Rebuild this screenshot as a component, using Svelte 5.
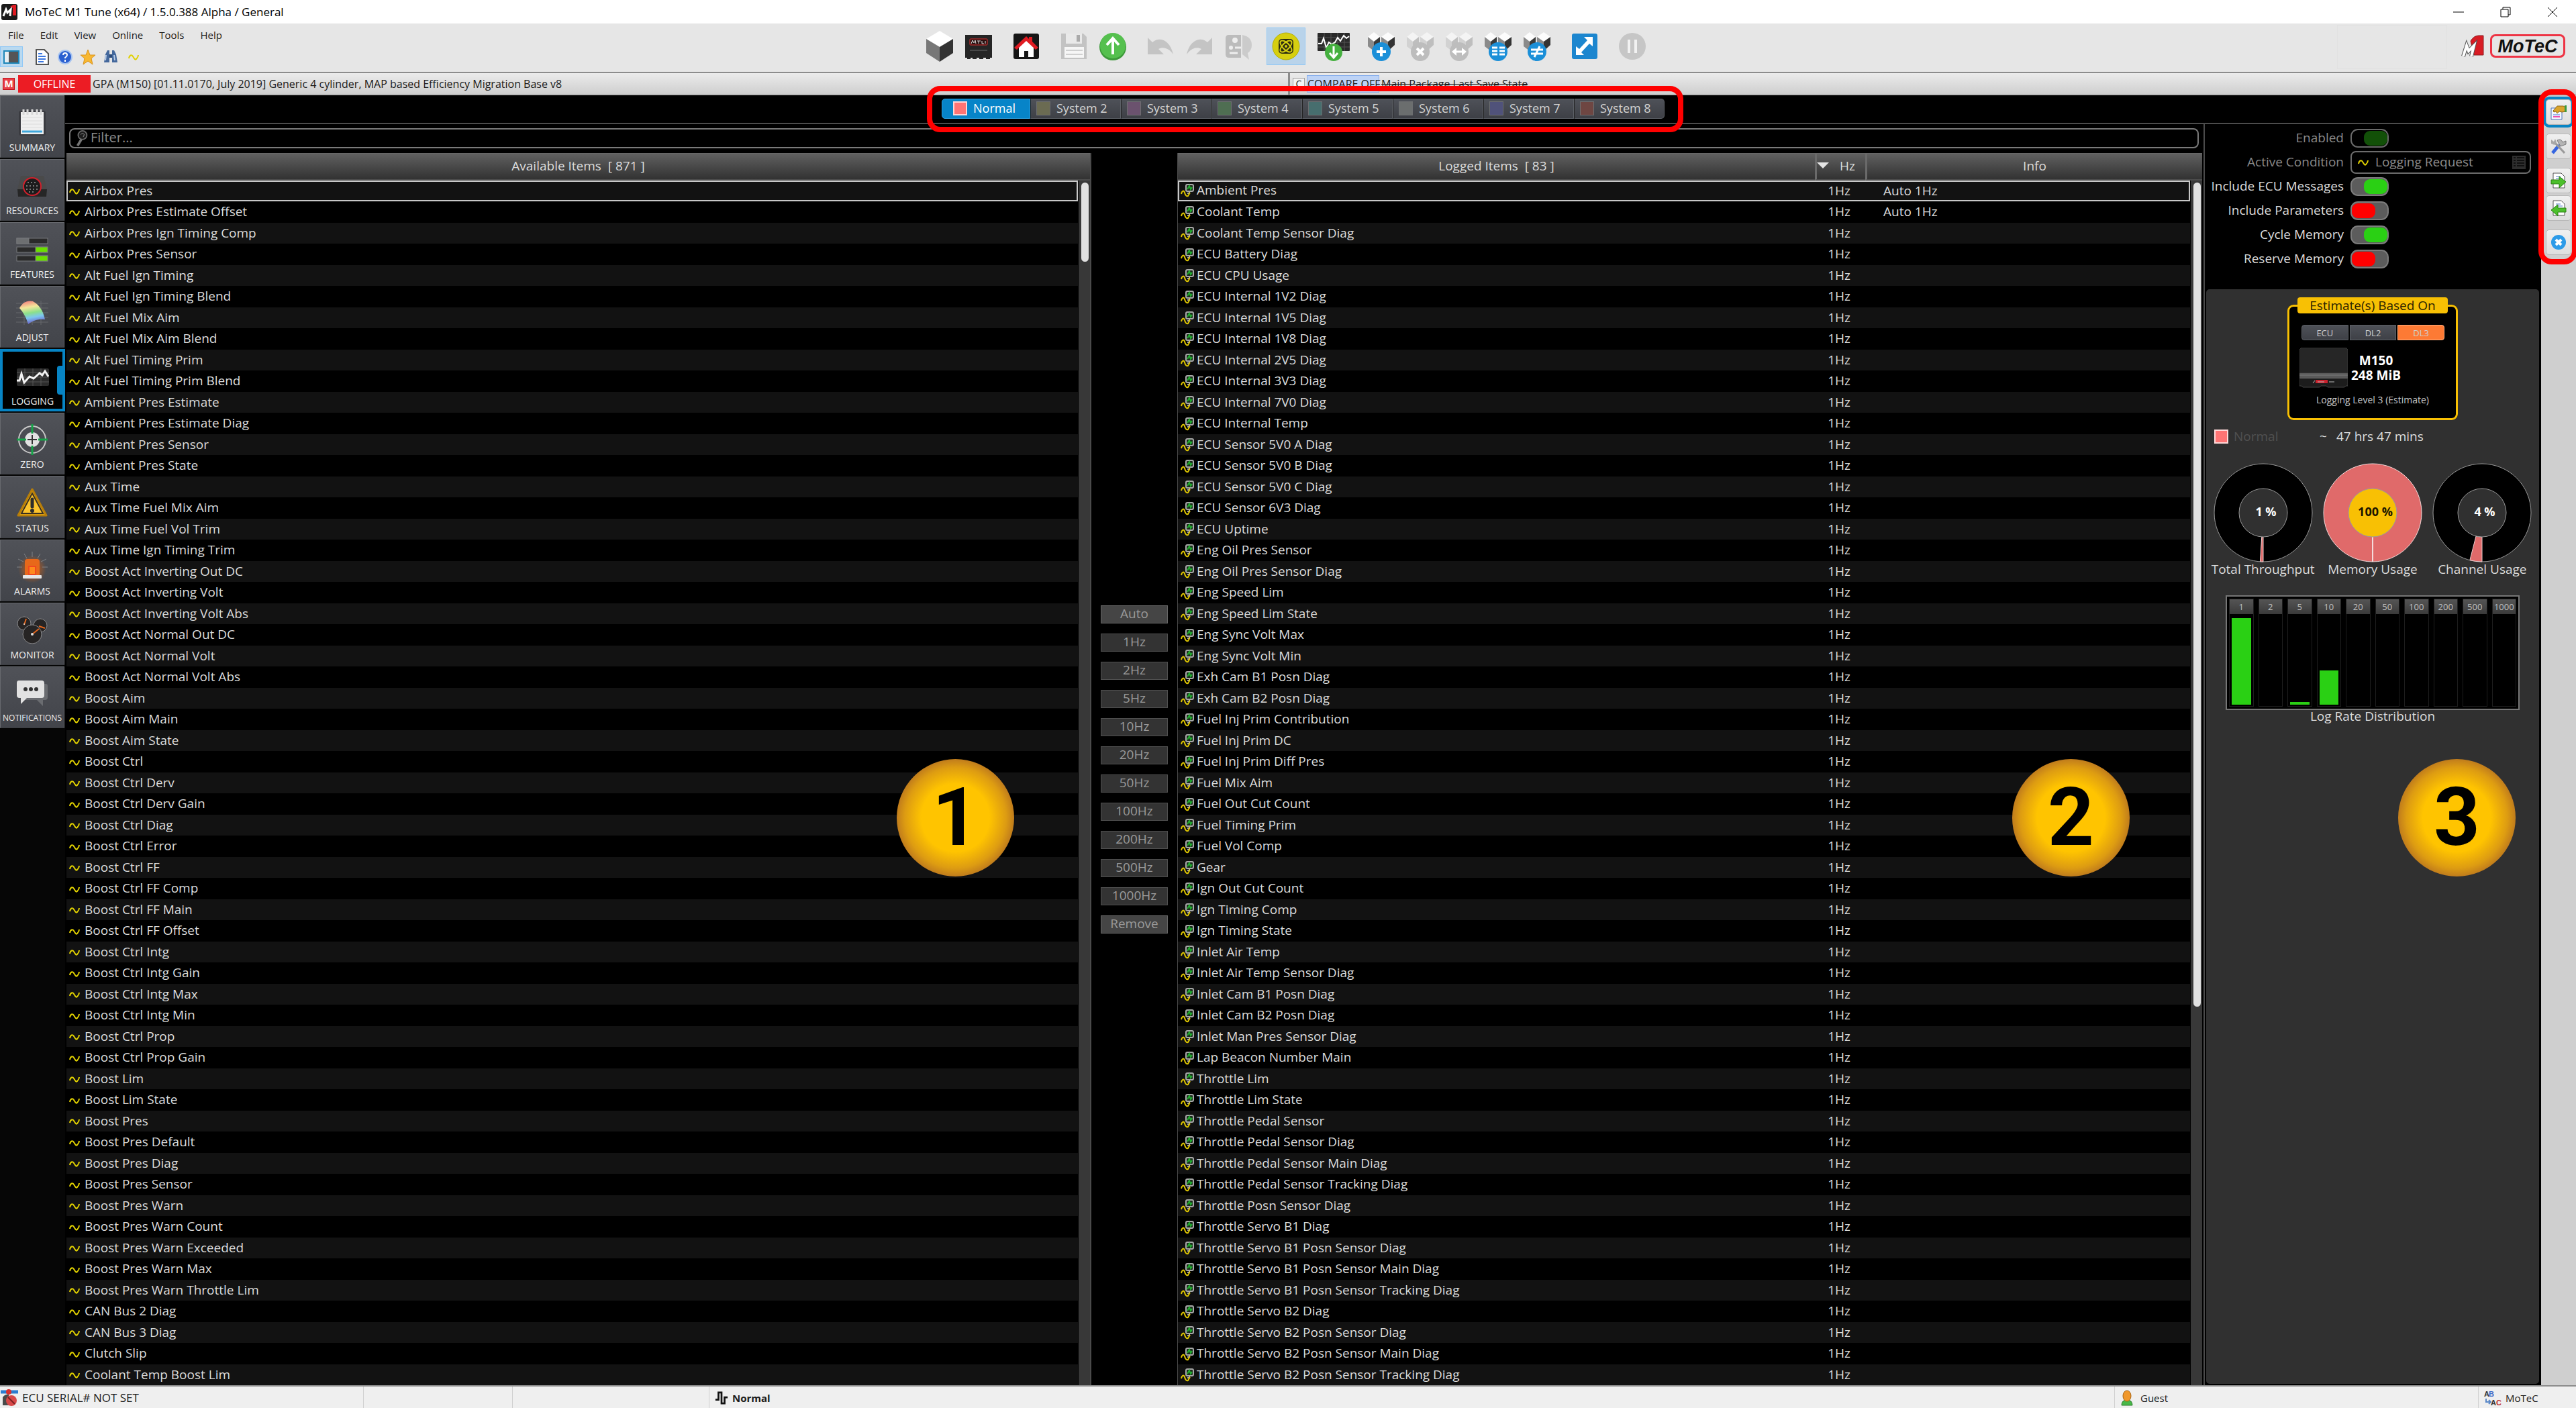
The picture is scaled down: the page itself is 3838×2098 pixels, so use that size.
<script>
  const menus = ['File', 'Edit', 'View', 'Online', 'Tools', 'Help'];

  const toolGroups = [
    ['cube', 'ecu'],
    ['home'],
    ['save', 'up'],
    ['undo', 'redo', 'script'],
    ['atom'],
    ['scope'],
    ['pkgAdd', 'pkgRemove', 'pkgSwap', 'pkgList', 'pkgHash'],
    ['expand'],
    ['pause'],
  ];

  const navItems = [
    'Summary', 'Resources', 'Features', 'Adjust', 'Logging',
    'Zero', 'Status', 'Alarms', 'Monitor', 'Notifications',
  ];

  const systems = [
    { name: 'Normal', color: '#ff7474' },
    { name: 'System 2', color: '#6b6b52' },
    { name: 'System 3', color: '#6b526e' },
    { name: 'System 4', color: '#4f6e52' },
    { name: 'System 5', color: '#476e6e' },
    { name: 'System 6', color: '#6b6e6e' },
    { name: 'System 7', color: '#50527a' },
    { name: 'System 8', color: '#6e4642' },
  ];

  const available = [
    'Airbox Pres', 'Airbox Pres Estimate Offset', 'Airbox Pres Ign Timing Comp', 'Airbox Pres Sensor',
    'Alt Fuel Ign Timing', 'Alt Fuel Ign Timing Blend', 'Alt Fuel Mix Aim', 'Alt Fuel Mix Aim Blend',
    'Alt Fuel Timing Prim', 'Alt Fuel Timing Prim Blend', 'Ambient Pres Estimate', 'Ambient Pres Estimate Diag',
    'Ambient Pres Sensor', 'Ambient Pres State', 'Aux Time', 'Aux Time Fuel Mix Aim', 'Aux Time Fuel Vol Trim',
    'Aux Time Ign Timing Trim', 'Boost Act Inverting Out DC', 'Boost Act Inverting Volt',
    'Boost Act Inverting Volt Abs', 'Boost Act Normal Out DC', 'Boost Act Normal Volt', 'Boost Act Normal Volt Abs',
    'Boost Aim', 'Boost Aim Main', 'Boost Aim State', 'Boost Ctrl', 'Boost Ctrl Derv', 'Boost Ctrl Derv Gain',
    'Boost Ctrl Diag', 'Boost Ctrl Error', 'Boost Ctrl FF', 'Boost Ctrl FF Comp', 'Boost Ctrl FF Main',
    'Boost Ctrl FF Offset', 'Boost Ctrl Intg', 'Boost Ctrl Intg Gain', 'Boost Ctrl Intg Max', 'Boost Ctrl Intg Min',
    'Boost Ctrl Prop', 'Boost Ctrl Prop Gain', 'Boost Lim', 'Boost Lim State', 'Boost Pres', 'Boost Pres Default',
    'Boost Pres Diag', 'Boost Pres Sensor', 'Boost Pres Warn', 'Boost Pres Warn Count', 'Boost Pres Warn Exceeded',
    'Boost Pres Warn Max', 'Boost Pres Warn Throttle Lim', 'CAN Bus 2 Diag', 'CAN Bus 3 Diag', 'Clutch Slip',
    'Coolant Temp Boost Lim',
  ];

  const logged = [
    'Ambient Pres', 'Coolant Temp', 'Coolant Temp Sensor Diag', 'ECU Battery Diag', 'ECU CPU Usage',
    'ECU Internal 1V2 Diag', 'ECU Internal 1V5 Diag', 'ECU Internal 1V8 Diag', 'ECU Internal 2V5 Diag',
    'ECU Internal 3V3 Diag', 'ECU Internal 7V0 Diag', 'ECU Internal Temp', 'ECU Sensor 5V0 A Diag',
    'ECU Sensor 5V0 B Diag', 'ECU Sensor 5V0 C Diag', 'ECU Sensor 6V3 Diag', 'ECU Uptime', 'Eng Oil Pres Sensor',
    'Eng Oil Pres Sensor Diag', 'Eng Speed Lim', 'Eng Speed Lim State', 'Eng Sync Volt Max', 'Eng Sync Volt Min',
    'Exh Cam B1 Posn Diag', 'Exh Cam B2 Posn Diag', 'Fuel Inj Prim Contribution', 'Fuel Inj Prim DC',
    'Fuel Inj Prim Diff Pres', 'Fuel Mix Aim', 'Fuel Out Cut Count', 'Fuel Timing Prim', 'Fuel Vol Comp', 'Gear',
    'Ign Out Cut Count', 'Ign Timing Comp', 'Ign Timing State', 'Inlet Air Temp', 'Inlet Air Temp Sensor Diag',
    'Inlet Cam B1 Posn Diag', 'Inlet Cam B2 Posn Diag', 'Inlet Man Pres Sensor Diag', 'Lap Beacon Number Main',
    'Throttle Lim', 'Throttle Lim State', 'Throttle Pedal Sensor', 'Throttle Pedal Sensor Diag',
    'Throttle Pedal Sensor Main Diag', 'Throttle Pedal Sensor Tracking Diag', 'Throttle Posn Sensor Diag',
    'Throttle Servo B1 Diag', 'Throttle Servo B1 Posn Sensor Diag', 'Throttle Servo B1 Posn Sensor Main Diag',
    'Throttle Servo B1 Posn Sensor Tracking Diag', 'Throttle Servo B2 Diag', 'Throttle Servo B2 Posn Sensor Diag',
    'Throttle Servo B2 Posn Sensor Main Diag', 'Throttle Servo B2 Posn Sensor Tracking Diag',
  ];

  const rates = ['Auto', '1Hz', '2Hz', '5Hz', '10Hz', '20Hz', '50Hz', '100Hz', '200Hz', '500Hz', '1000Hz', 'Remove'];

  let options = $state([
    { label: 'Include ECU Messages', on: true },
    { label: 'Include Parameters', on: false },
    { label: 'Cycle Memory', on: true },
    { label: 'Reserve Memory', on: false },
  ]);

  const gauges = [
    { label: 'Total Throughput', value: 1 },
    { label: 'Memory Usage', value: 100 },
    { label: 'Channel Usage', value: 4 },
  ];

  const distribution = [
    { rate: 1, fill: 98 }, { rate: 2, fill: 0 }, { rate: 5, fill: 3 }, { rate: 10, fill: 39 }, { rate: 20, fill: 0 },
    { rate: 50, fill: 0 }, { rate: 100, fill: 0 }, { rate: 200, fill: 0 }, { rate: 500, fill: 0 }, { rate: 1000, fill: 0 },
  ];

  let system = $state('Normal');
  let page = $state('Logging');
  let logger = $state('DL3');
  let filter = $state('');

  // Slice of the ring, starting at six o'clock and running clockwise
  function slice(value) {
    const a = (value / 100) * Math.PI * 2;
    const at = (r) => `${75 - r * Math.sin(a)} ${75 + r * Math.cos(a)}`;
    return `M75 148 A73 73 0 0 1 ${at(73)} L${at(36)} A36 36 0 0 0 75 111 Z`;
  }
</script>

{#snippet wave()}
  <svg class="wave" viewBox="0 0 16 16" aria-hidden="true">
    <path d="M1 10C2 5 5 4 7 7S10 13 12 11s3-3 3-6" fill="none" stroke="#e0d000" stroke-width="2" />
  </svg>
{/snippet}

{#snippet loggedIcon()}
  <svg class="logged-icon" viewBox="0 0 20 20" aria-hidden="true">
    <rect x="8" y="1" width="11" height="10" rx="2" fill="#1c2a1c" stroke="#a8a8a8" stroke-width="2" />
    <path d="M10 8l3-5 2 5 2-3" fill="none" stroke="#22b030" stroke-width="2" />
    <path d="M13 11v3h-3" fill="none" stroke="#a8a8a8" stroke-width="2" />
    <path d="M1 15c1-5 4-6 5-2s3 6 5 5l3-5" fill="none" stroke="#e0c800" stroke-width="2" />
  </svg>
{/snippet}

{#snippet cubes(dim)}
  <path d="M4 10l9-7 9 7-9 7z" fill={dim ? '#f4f4f4' : '#fcfcfc'} />
  <path d="M4 10l9 7v14l-9-7z" fill={dim ? '#d2d2d2' : '#8a8a8a'} />
  <path d="M13 17l9-7v12l-9 9z" fill={dim ? '#bebebe' : '#3a3a3a'} />
  <path d="M24 10l10-7 10 7-10 7z" fill={dim ? '#f4f4f4' : '#fcfcfc'} />
  <path d="M24 10l10 7v14l-10-7z" fill={dim ? '#d2d2d2' : '#8a8a8a'} />
  <path d="M34 17l10-7v12l-10 9z" fill={dim ? '#bebebe' : '#333'} />
  <circle cx="24" cy="32" r="14" fill={dim ? '#bdbdbd' : '#1b8fd8'} />
{/snippet}

{#snippet toolIcon(name)}
  <svg class="tool-icon" viewBox="0 0 48 48" aria-hidden="true">
    {#if name === 'cube'}
      <path d="M24 1l20 12-20 12L4 13z" fill="#fff" />
      <path d="M4 13l20 12v22L4 34z" fill="#777" />
      <path d="M44 13L24 25v22l20-13z" fill="#333" />
    {:else if name === 'ecu'}
      <path d="M4 7h40v34h-3v2h-6v-2h-4v2h-6v-2h-4v2h-6v-2h-3v2H7v-2H4z" fill="#252525" />
      <rect x="11" y="13" width="26" height="9" rx="1" fill="#2a1010" stroke="#e03030" stroke-width="1" />
      <path d="M13 20l2-5 2 4 2-4 1 5M22 16h5M24 16v4M29 16v4h3M34 16v4" fill="none" stroke="#ddd" stroke-width="1" />
      <path d="M11 30h26" stroke="#484848" stroke-width="2" />
    {:else if name === 'home'}
      <rect x="5" y="5" width="38" height="38" rx="3" fill="#161616" />
      <path d="M13 24v16h8v-9h6v9h8V24L24 14z" fill="#fff" />
      <path d="M24 9l4 4v-3h5v7l9 9-4 3-14-13L10 29l-4-3z" fill="#e01b22" />
    {:else if name === 'save'}
      <path d="M5 5h33l5 5v33H5z" fill="#c3c3c3" />
      <rect x="12" y="5" width="24" height="15" fill="#e9e9e9" />
      <rect x="28" y="7" width="5" height="10" fill="#aaa" />
      <rect x="10" y="25" width="29" height="16" fill="#f6f6f6" />
      <path d="M12 30h25M12 36h25" stroke="#d0d0d0" stroke-width="2" />
    {:else if name === 'up'}
      <circle cx="24" cy="25" r="20" fill="#3d9a3a" />
      <circle cx="24" cy="23" r="19" fill="#55c04e" />
      <path d="M24 36V14M15 22l9-10 9 10" fill="none" stroke="#fff" stroke-width="4" />
    {:else if name === 'undo'}
      <path d="M5 11l7 7c10-9 26-4 31 18-6-9-15-12-22-8l8 8H5z" fill="#c4c4c4" />
    {:else if name === 'redo'}
      <path d="M43 11l-7 7C26 9 10 14 5 36c6-9 15-12 22-8l-8 8h24z" fill="#c4c4c4" />
    {:else if name === 'script'}
      <path d="M10 7h18v34H10q-5 0-5-5V12q0-5 5-5z" fill="#bcbcbc" />
      <path d="M30 7q14 3 14 15 0 8-6 12l2 10-10-8z" fill="#cbcbcb" />
      <circle cx="19" cy="15" r="4" fill="#eee" />
      <circle cx="13" cy="26" r="3" fill="#eee" />
      <path d="M19 26h9M11 34h12" stroke="#eee" stroke-width="3" />
    {:else if name === 'atom'}
      <circle cx="24" cy="24" r="20" fill="#d6cf10" stroke="#b5ae08" stroke-width="1" />
      <rect x="13" y="13" width="22" height="22" rx="5" fill="#2b2b12" />
      <g fill="none" stroke="#d6cf10" stroke-width="2">
        <ellipse cx="24" cy="24" rx="5" ry="11" transform="rotate(45 24 24)" />
        <ellipse cx="24" cy="24" rx="5" ry="11" transform="rotate(-45 24 24)" />
      </g>
      <circle cx="24" cy="24" r="2" fill="#d6cf10" />
    {:else if name === 'scope'}
      <rect x="0" y="4" width="48" height="27" rx="1" fill="#2a2a2a" />
      <path d="M0 11h48M0 18h48M0 25h48M10 4v27M20 4v27M30 4v27M40 4v27" stroke="#555" stroke-width="1" />
      <path d="M1 20h5l3-8 4 14 4-8 4 3 5-3 4-7 4 5 5-8 4 4 4-3" fill="none" stroke="#fff" stroke-width="2" />
      <circle cx="24" cy="33" r="13" fill="#45b03f" />
      <path d="M24 24v16M18 34l6 7 6-7" fill="none" stroke="#fff" stroke-width="3" />
    {:else if name === 'pkgAdd'}
      {@render cubes(false)}
      <path d="M24 25v14M17 32h14" stroke="#fff" stroke-width="4" />
    {:else if name === 'pkgRemove'}
      {@render cubes(true)}
      <path d="M19 27l10 10M29 27L19 37" stroke="#fff" stroke-width="4" />
    {:else if name === 'pkgSwap'}
      {@render cubes(true)}
      <path d="M15 32h18" stroke="#fff" stroke-width="3" />
      <path d="M13 32l7-6v12zM35 32l-7-6v12z" fill="#fff" />
    {:else if name === 'pkgList'}
      {@render cubes(false)}
      <path d="M15 26h8M15 31h8M15 36h8M26 26h8M26 31h8M26 36h8" stroke="#fff" stroke-width="3" />
    {:else if name === 'pkgHash'}
      {@render cubes(false)}
      <path d="M15 29h18M15 35h18M28 24l-8 16" stroke="#fff" stroke-width="3" />
    {:else if name === 'expand'}
      <rect x="5" y="5" width="38" height="38" rx="3" fill="#1c86cf" />
      <path d="M36 10v14l-5-4-12 13 4 4H11V24l5 4 12-13-5-5z" fill="#fff" />
    {:else}
      <circle cx="24" cy="24" r="20" fill="#c6c6c6" />
      <path d="M19 14v20M29 14v20" stroke="#f2f2f2" stroke-width="4" />
    {/if}
  </svg>
{/snippet}

{#snippet navIcon(name)}
  <svg class="nav-icon" viewBox="0 0 48 48" aria-hidden="true">
    {#if name === 'Summary'}
      <rect x="4" y="6" width="40" height="37" rx="3" fill="#3a3b40" />
      <path d="M7 8h34v33H7z" fill="#efefef" />
      <path d="M9 37h30" stroke="#3fa7dc" stroke-width="3" />
      <path d="M9 16h30M9 21h30M9 26h30M9 31h30" stroke="#dcdcdc" stroke-width="1" />
      <path d="M11 12V4M17 12V4M24 12V4M31 12V4M37 12V4" stroke="#d8d8d8" stroke-width="3" />
    {:else if name === 'Resources'}
      <path d="M7 9h34l5 20H2z" fill="#4a4a4a" />
      <path d="M2 29h44l-1 11H3z" fill="#262626" />
      <circle cx="24" cy="25" r="13" fill="#1c1c1c" stroke="#d0202c" stroke-width="2" />
      <path d="M17 19h14M15 24h18M15 29h18M19 33h10" stroke="#777" stroke-width="2" stroke-dasharray="2 3" />
    {:else if name === 'Features'}
      <g stroke="#77797c" stroke-width="1">
        <rect x="1" y="7" width="46" height="8" fill="#2a2a2a" />
        <rect x="1" y="20" width="46" height="8" fill="#2a2a2a" />
        <rect x="1" y="33" width="46" height="8" fill="#2a2a2a" />
        <rect x="1" y="7" width="18" height="8" fill="#6d6f71" />
        <rect x="29" y="20" width="18" height="8" fill="#6be000" />
        <rect x="29" y="33" width="18" height="8" fill="#6be000" />
      </g>
    {:else if name === 'Adjust'}
      <defs>
        <linearGradient id="surface" x1="0.4" y1="0" x2="0.6" y2="1">
          <stop offset="0" stop-color="#f58a80" />
          <stop offset="0.25" stop-color="#f3e79b" />
          <stop offset="0.5" stop-color="#8be08a" />
          <stop offset="0.7" stop-color="#7cc6f0" />
          <stop offset="1" stop-color="#6a50c0" />
        </linearGradient>
      </defs>
      <path d="M0 10h48M0 17h48M0 24h48M0 31h48M0 38h48M12 6v36M24 6v36M37 6v36" stroke="#66686c" stroke-width="1" />
      <path d="M5 17C10 8 17 5 25 7c9 5 15 13 18 27-9-1-17 1-25 7C15 31 11 24 5 17z" fill="url(#surface)" />
    {:else if name === 'Logging'}
      <rect x="0" y="12" width="48" height="26" rx="2" fill="#2c2c2c" />
      <path d="M0 18h48M0 25h48M0 32h48M12 12v26M24 12v26M36 12v26" stroke="#555" stroke-width="1" />
      <path d="M0 30h4l3-10 4 13 8-9 6 3 9-8 4 3 4-6 5 8" fill="none" stroke="#f2f2f2" stroke-width="3" />
    {:else if name === 'Zero'}
      <circle cx="24" cy="24" r="20" fill="none" stroke="#c8c8c8" stroke-width="2" />
      <circle cx="24" cy="24" r="11" fill="#e2e2e2" />
      <path d="M24 1v14M24 33v14M1 24h14M33 24h14" stroke="#16a348" stroke-width="3" />
      <path d="M24 17v14M17 24h14" stroke="#333" stroke-width="2" />
    {:else if name === 'Status'}
      <path d="M24 3l21 39H3z" fill="#fbbc1f" stroke="#b87e08" stroke-width="3" stroke-linejoin="round" />
      <path d="M24 9l16 30H8z" fill="#fcc32c" stroke="#3a3020" stroke-width="2" />
      <path d="M24 18v11" stroke="#2c2c2c" stroke-width="5" stroke-linecap="round" />
      <circle cx="24" cy="35" r="3" fill="#2c2c2c" />
    {:else if name === 'Alarms'}
      <defs>
        <radialGradient id="glow">
          <stop offset="0" stop-color="#d86010" />
          <stop offset="1" stop-color="#d86010" stop-opacity="0" />
        </radialGradient>
      </defs>
      <circle cx="24" cy="28" r="21" fill="url(#glow)" />
      <path d="M24 2v8M12 5l4 7M36 5l-4 7M3 13l8 4M45 13l-8 4M1 25h8M47 25h-8" stroke="#808286" stroke-width="1" />
      <path d="M13 37V17q0-4 4-4h14q4 0 4 4v20z" fill="#e8681a" />
      <path d="M19 36V24h10v12z" fill="#ff8a1c" stroke="#f04820" stroke-width="2" />
      <rect x="10" y="37" width="28" height="5" rx="1" fill="#e6e6e6" />
    {:else if name === 'Monitor'}
      <g fill="#262424" stroke="#8a8a8c" stroke-width="1">
        <circle cx="12" cy="14" r="10" />
        <circle cx="36" cy="17" r="10" />
        <circle cx="24" cy="30" r="14" />
      </g>
      <path d="M12 16l3-9M34 18l9 3M24 30l10-8" stroke="#e0641c" stroke-width="2" />
      <circle cx="24" cy="30" r="2" fill="#ddd" />
      <circle cx="12" cy="15" r="1" fill="#ddd" />
    {:else}
      <path d="M10 10h34q3 0 3 3v17q0 4-4 4h-3v9l-9-9H10z" fill="#6a6c70" />
      <path d="M4 5h34q4 0 4 4v18q0 4-4 4H16l-9 9v-9H5q-4 0-4-4V9q0-4 3-4z" fill="#e2e2e2" />
      <circle cx="14" cy="18" r="3" fill="#333" />
      <circle cx="22" cy="18" r="3" fill="#333" />
      <circle cx="30" cy="18" r="3" fill="#333" />
    {/if}
  </svg>
{/snippet}

{#snippet sideIcon(name)}
  <svg class="side-icon" viewBox="0 0 24 24" aria-hidden="true">
    {#if name === 'Properties'}
      <path d="M1 6h16v17H1z" fill="#f4f8ff" stroke="#4a72b8" stroke-width="1" />
      <path d="M4 16h10" stroke="#4a72d8" stroke-width="1" />
      <path d="M4 19h10" stroke="#f050b0" stroke-width="2" />
      <path d="M4 10l6-7h9l4 2v6l-6 1-4-1-3 3-2-3-3 1z" fill="#dba52c" stroke="#8a6618" stroke-width="1" />
      <path d="M21 2h3v10h-3z" fill="#3c9a3c" />
    {:else if name === 'Tools'}
      <path d="M3 22L13 10" stroke="#3565e0" stroke-width="5" />
      <path d="M21 22L5 5" stroke="#9a9a9a" stroke-width="3" />
      <path d="M10 3q6-3 8 3l5-2v5l-8 3-3-5z" fill="#b5b5b5" stroke="#777" stroke-width="1" />
      <path d="M1 2l4 3 2-4 2 5-3 4-5-2z" fill="#a8a8a8" />
    {:else if name === 'Export'}
      <path d="M4 1h12l5 5v17H4z" fill="#fff" stroke="#555" stroke-width="1" />
      <path d="M8 6h7M8 9h10" stroke="#5078c8" stroke-width="1" />
      <path d="M1 11h12V6l10 8-10 9v-6H1z" fill="#4cc02c" stroke="#2c8014" stroke-width="1" />
    {:else if name === 'Import'}
      <path d="M4 1h12l5 5v17H4z" fill="#fff" stroke="#555" stroke-width="1" />
      <path d="M8 6h7M8 9h10" stroke="#5078c8" stroke-width="1" />
      <path d="M23 12H11V7L1 15l10 9v-6h12z" fill="#4cc02c" stroke="#2c8014" stroke-width="1" />
    {:else}
      <circle cx="12" cy="12" r="11" fill="#2d9be8" />
      <path d="M8 8l8 8M16 8l-8 8" stroke="#fff" stroke-width="4" />
    {/if}
  </svg>
{/snippet}

<div class="app">
  <div class="titlebar">
    <svg class="app-icon" viewBox="0 0 24 24" aria-hidden="true">
      <rect width="24" height="24" rx="3" fill="#1a1a1a" />
      <path d="M13 4l5-3h4v16h-5V6z" fill="#e01b22" />
      <path d="M3 18l4-10 2 5 5-5-1 10" fill="none" stroke="#fff" stroke-width="3" />
    </svg>
    <span class="title">MoTeC M1 Tune (x64) / 1.5.0.388 Alpha / General</span>
    <div class="window-buttons">
      <button aria-label="Minimize">
        <svg viewBox="0 0 16 16"><path d="M0 8h16" /></svg>
      </button>
      <button aria-label="Restore">
        <svg viewBox="0 0 16 16"><path d="M1 4h11v11H1zM4 4V1h11v11h-3" /></svg>
      </button>
      <button aria-label="Close">
        <svg viewBox="0 0 16 16"><path d="M1 1l14 14M15 1L1 15" /></svg>
      </button>
    </div>
  </div>

  <header class="toolbar">
    <div class="left-tools">
      <nav class="menubar">
        {#each menus as item}
          <button>{item}</button>
        {/each}
      </nav>
      <div class="quick">
        <button class="active" aria-label="Toggle side panel">
          <svg viewBox="0 0 24 24">
            <rect x="1" y="3" width="22" height="18" fill="#555" stroke="#1c86b8" stroke-width="2" />
            <rect x="2" y="4" width="6" height="16" fill="#e8eef2" />
          </svg>
        </button>
        <button aria-label="Notes">
          <svg viewBox="0 0 24 24">
            <path d="M3 1h12l6 6v16H3z" fill="#fff" stroke="#555" stroke-width="2" />
            <path d="M6 7h6M6 11h11M6 15h11M6 19h8" stroke="#3c78e0" stroke-width="2" />
          </svg>
        </button>
        <button aria-label="Help">
          <svg viewBox="0 0 24 24">
            <circle cx="12" cy="12" r="10" fill="#2a5fd0" stroke="#a8c4f0" stroke-width="2" />
            <path d="M9 9q0-3 3-3t3 3q0 2-3 4v1M12 16v3" fill="none" stroke="#fff" stroke-width="2" />
          </svg>
        </button>
        <button aria-label="Favourites">
          <svg viewBox="0 0 24 24">
            <path d="M12 1l3 8h8l-6 5 2 9-7-5-7 5 2-9-6-5h8z" fill="#f8b832" stroke="#d8921c" stroke-width="1" />
          </svg>
        </button>
        <button aria-label="Find">
          <svg viewBox="0 0 24 24">
            <path d="M2 20l2-12 3-6h3v18zM22 20L20 8l-3-6h-3v18z" fill="#44689c" />
            <path d="M10 8h4v5h-4z" fill="#2c4a78" />
            <path d="M5 9l-1 8M17 9l1 8" stroke="#b8cce8" stroke-width="2" />
          </svg>
        </button>
        <button aria-label="Channels">{@render wave()}</button>
      </div>
    </div>

    <div class="tools">
      {#each toolGroups as group}
        <div class="tool-group">
          {#each group as name}
            <button class:active={name === 'atom'} aria-label={name}>{@render toolIcon(name)}</button>
          {/each}
        </div>
      {/each}
    </div>

    <div class="brand">
      <div class="slot"></div>
      <svg class="m1" viewBox="0 0 34 34" aria-hidden="true">
        <path d="M14 9q5-8 12-8h7v29H19z" fill="#d81c24" stroke="#8a1a1e" stroke-width="1" />
        <path d="M3 32l5-16 3 8 8-8-4 16" fill="none" stroke="#555" stroke-width="6" />
        <path d="M3 32l5-16 3 8 8-8-4 16" fill="none" stroke="#fff" stroke-width="4" />
      </svg>
      <span class="motec">MoTeC</span>
    </div>
  </header>

  <div class="packages">
    <div class="package">
      <span class="marker main">M</span>
      <span class="offline">OFFLINE</span>
      <span>GPA (M150) [01.11.0170, July 2019] Generic 4 cylinder, MAP based Efficiency Migration Base v8</span>
    </div>
    <div class="package">
      <span class="marker">C</span>
      <span class="compare">COMPARE OFF</span>
      <s>Main Package Last Save State</s>
    </div>
  </div>

  <div class="workspace">
    <nav class="pages">
      {#each navItems as item}
        <button class:active={page === item} class:long={item.length > 10} onclick={() => (page = item)}>
          {@render navIcon(item)}
          <span>{item.toUpperCase()}</span>
        </button>
      {/each}
    </nav>

    <main>
      <div class="systems">
        <div class="tabs" role="tablist">
          {#each systems as tab}
            <button
              role="tab"
              aria-selected={system === tab.name}
              class:active={system === tab.name}
              onclick={() => (system = tab.name)}
            >
              <i style:background={tab.color}></i>{tab.name}
            </button>
          {/each}
          <div class="highlight"></div>
        </div>
      </div>

      <div class="content">
        <div class="lists">
          <label class="filter">
            <svg viewBox="0 0 18 26" aria-hidden="true">
              <circle cx="10" cy="8" r="7" fill="#1c1c1c" stroke="#6a6a6a" stroke-width="2" />
              <path d="M7 7l3-2 3 2-2 4" fill="none" stroke="#999" stroke-width="1" />
              <path d="M8 15L2 25" stroke="#777" stroke-width="4" />
            </svg>
            <input type="text" placeholder="Filter..." aria-label="Filter" bind:value={filter} />
          </label>

          <div class="columns">
            <table class="available">
              <colgroup><col /><col class="scroll-col" /></colgroup>
              <thead>
                <tr><th colspan="2">Available Items &nbsp;[ 871 ]</th></tr>
              </thead>
              <tbody>
                {#each available as name, i}
                  <tr class:selected={i === 0}>
                    <td class="name">{@render wave()}{name}</td>
                    {#if i === 0}
                      <td class="scroll" rowspan={available.length}><div class="thumb short"></div></td>
                    {/if}
                  </tr>
                {/each}
              </tbody>
            </table>

            <div class="rates">
              {#each rates as rate}
                <button class:bright={rate === 'Auto' || rate === 'Remove'}>{rate}</button>
              {/each}
            </div>

            <table class="logged">
              <colgroup><col /><col class="hz-col" /><col class="info-col" /><col class="scroll-col" /></colgroup>
              <thead>
                <tr>
                  <th>Logged Items &nbsp;[ 83 ]</th>
                  <th class="hz"><span class="sort"></span>Hz</th>
                  <th colspan="2">Info</th>
                </tr>
              </thead>
              <tbody>
                {#each logged as name, i}
                  <tr class:selected={i === 0}>
                    <td class="name">{@render loggedIcon()}{name}</td>
                    <td class="rate">1Hz</td>
                    <td class="info">{i < 2 ? 'Auto 1Hz' : ''}</td>
                    {#if i === 0}
                      <td class="scroll" rowspan={logged.length}><div class="thumb long"></div></td>
                    {/if}
                  </tr>
                {/each}
              </tbody>
            </table>
          </div>
        </div>

        <section class="settings">
          <div class="form">
            <label class="dim" for="enabled">Enabled</label>
            <input id="enabled" class="toggle" type="checkbox" checked disabled />
            <label class="dim" for="condition">Active Condition</label>
            <div class="condition">
              {@render wave()}
              <select id="condition">
                <option>Logging Request</option>
              </select>
              <svg class="list-icon" viewBox="0 0 20 20" aria-hidden="true">
                <rect width="20" height="20" fill="#2e2e2e" />
                <path d="M2 3h3M2 7h3M2 11h3M2 15h3M7 3h11M7 7h11M7 11h11M7 15h11" stroke="#111" stroke-width="2" />
              </svg>
            </div>
            {#each options as option, i}
              <label for="option-{i}">{option.label}</label>
              <input id="option-{i}" class="toggle" type="checkbox" bind:checked={option.on} />
            {/each}
          </div>

          <div class="estimates">
            <fieldset>
              <legend>Estimate(s) Based On</legend>
              <div class="loggers">
                {#each ['ECU', 'DL2', 'DL3'] as name}
                  <button class:active={logger === name} onclick={() => (logger = name)}>{name}</button>
                {/each}
              </div>
              <div class="device">
                <svg viewBox="0 0 72 60" aria-hidden="true">
                  <path d="M3 0h66l3 3v35H0V3z" fill="#262626" stroke="#3c3c3c" stroke-width="1" />
                  <path d="M0 38h72v8H0z" fill="#5a5a5a" />
                  <path d="M0 41h72" stroke="#7c7c7c" stroke-width="1" />
                  <path d="M0 46h72v11h-3l-2 2H42l-2-2h-8l-2 2H5l-2-2H0z" fill="#1c1c1c" stroke="#444" stroke-width="1" />
                  <rect x="24" y="48" width="18" height="5" fill="#c8202c" />
                  <path d="M20 53l3-4M27 51h10M44 51h8" stroke="#bbb" stroke-width="1" />
                </svg>
                <strong>M150<br />248 MiB</strong>
              </div>
              <p>Logging Level 3 (Estimate)</p>
            </fieldset>

            <div class="duration">
              <i></i>
              <span class="system-name">Normal</span>
              <span class="approx">~</span>
              <span>47 hrs 47 mins</span>
            </div>

            <div class="gauges">
              {#each gauges as gauge}
                <figure>
                  <svg viewBox="0 0 150 150" role="img" aria-label={gauge.label}>
                    <circle cx="75" cy="75" r="73" fill={gauge.value === 100 ? '#e06a6a' : '#000'}
                      stroke={gauge.value === 100 ? '#f4dcdc' : '#9a9a9a'} stroke-width="1" />
                    {#if gauge.value < 100}
                      <path d={slice(gauge.value)} fill="#e06a6a" stroke="#e8d0d0" stroke-width="1" />
                    {:else}
                      <path d="M75 111v37" stroke="#f4dcdc" stroke-width="2" />
                    {/if}
                    <circle cx="75" cy="75" r="36" fill={gauge.value === 100 ? '#f8c004' : '#303030'}
                      stroke="#9a9a9a" stroke-width="1" />
                    <text x="79" y="80" class:full={gauge.value === 100}>{gauge.value} %</text>
                  </svg>
                  <figcaption>{gauge.label}</figcaption>
                </figure>
              {/each}
            </div>

            <div class="histogram">
              {#each distribution as bin}
                <div class="bin">
                  <span>{bin.rate}</span>
                  <div class="track">
                    {#if bin.fill}<div class="bar" style:height="{bin.fill}%"></div>{/if}
                  </div>
                </div>
              {/each}
            </div>
            <div class="caption">Log Rate Distribution</div>
          </div>
        </section>
      </div>
    </main>

    <aside>
      {#each ['Properties', 'Tools', 'Export', 'Import', 'Close'] as name, i}
        <button class:active={i === 0} class:spaced={i > 0 && name !== 'Import'} aria-label={name}>
          {@render sideIcon(name)}
        </button>
      {/each}
      <div class="highlight"></div>
    </aside>

    <div class="badge one">1</div>
    <div class="badge two">2</div>
    <div class="badge three">3</div>
  </div>

  <footer>
    <div class="serial">
      <svg viewBox="0 0 26 26" aria-hidden="true">
        <path d="M0 4h26" stroke="#2c7cd0" stroke-width="5" />
        <circle cx="12" cy="4" r="4" fill="#d83030" />
        <path d="M3 24V12q4-5 9-4v16z" fill="#4a4a4a" />
        <circle cx="16" cy="17" r="8" fill="#d84848" />
        <path d="M11 12l10 10" stroke="#7a2020" stroke-width="2" />
      </svg>
      ECU SERIAL# NOT SET
    </div>
    <div class="blank"></div>
    <div class="blank wide"></div>
    <div class="mode">
      <svg viewBox="0 0 22 22" aria-hidden="true">
        <path d="M1 14h5V2h5v18h5v-10h5" fill="none" stroke="#111" stroke-width="3" />
      </svg>
      <strong>Normal</strong>
    </div>
    <div class="user">
      <svg viewBox="0 0 18 24" aria-hidden="true">
        <path d="M1 23q0-8 8-8t8 8z" fill="#48b848" stroke="#2a7a2a" stroke-width="1" />
        <ellipse cx="9" cy="9" rx="6" ry="8" fill="#f0982c" stroke="#a86414" stroke-width="1" />
      </svg>
      Guest
    </div>
    <div class="naming">
      <svg viewBox="0 0 26 24" aria-hidden="true">
        <text x="0" y="10" fill="#333">A</text>
        <text x="7" y="10" fill="#3c68c8">B</text>
        <path d="M3 13v5h6M7 15l3 3-3 3" fill="none" stroke="#5a88c8" stroke-width="2" />
        <text x="10" y="23" fill="#333">A</text>
        <text x="18" y="23" fill="#c03030">C</text>
      </svg>
      MoTeC
    </div>
  </footer>
</div>

<style>
  :global(body) {
    margin: 0;
    background: #000;
  }

  .app {
    font-family: 'Open Sans', 'Noto Sans', sans-serif;
    font-size: 19px;
    line-height: 24px;
    color: #dcdcdc;
    overflow: hidden;
  }

  button,
  input,
  select {
    font: inherit;
    color: inherit;
    margin: 0;
    padding: 0;
    border: 0;
    background: none;
  }

  svg {
    display: block;
    flex: none;
  }

  /* Title bar */
  .titlebar {
    display: flex;
    align-items: center;
    height: 35px;
    padding-left: 2px;
    background: #fff;
    color: #000;
    font-size: 17px;
  }

  .app-icon {
    width: 24px;
    height: 24px;
  }

  .title {
    flex: 1;
    padding-left: 11px;
    white-space: nowrap;
  }

  .window-buttons {
    display: flex;
  }

  .window-buttons button {
    width: 70px;
    height: 35px;
  }

  .window-buttons svg {
    width: 16px;
    height: 16px;
    margin: 0 auto;
    fill: none;
    stroke: #000;
    stroke-width: 1px;
  }

  /* Menu and main toolbar */
  .toolbar {
    display: grid;
    grid-template-columns: 1fr auto 1fr;
    height: 72px;
    padding-right: 6px;
    background: #e6e6e6;
    color: #1c1c1c;
    font-size: 15px;
  }

  .menubar {
    display: flex;
    gap: 24px;
    height: 34px;
    padding-left: 12px;
  }

  .menubar button {
    line-height: 32px;
  }

  .quick {
    display: flex;
    align-items: center;
  }

  .quick button {
    display: flex;
    align-items: center;
    justify-content: center;
    width: 34px;
    height: 31px;
  }

  .quick button.active {
    margin-right: 12px;
    background: #b9d9f0;
    box-shadow: inset 0 0 0 1px #90c8f6;
  }

  .quick svg {
    width: 24px;
    height: 24px;
  }

  .quick .wave {
    width: 16px;
    height: 16px;
  }

  .tools {
    display: flex;
    gap: 13px;
    padding-top: 6px;
  }

  .tool-group {
    display: flex;
  }

  .tool-group button {
    display: flex;
    align-items: center;
    justify-content: center;
    width: 58px;
    height: 56px;
  }

  .tool-group button.active {
    background: #b9d3ea;
    box-shadow: inset 0 0 0 1px #90c8f6;
  }

  .tool-icon {
    width: 48px;
    height: 48px;
  }

  .brand {
    display: flex;
    justify-content: flex-end;
    align-items: flex-start;
    padding: 2px 10px 0 0;
  }

  .slot {
    width: 162px;
    height: 64px;
    margin-right: 21px;
    border: 1px solid #e1e1e1;
  }

  .m1 {
    width: 34px;
    height: 34px;
    margin: 15px 9px 0 0;
  }

  .motec {
    box-sizing: border-box;
    width: 112px;
    height: 35px;
    margin-top: 14px;
    border: 3px solid #ee3344;
    border-radius: 8px;
    color: #111;
    font: italic bold 27px/30px 'Liberation Sans', sans-serif;
    text-align: center;
  }

  /* Package bar */
  .packages {
    display: grid;
    grid-template-columns: 1fr 1fr;
    height: 32px;
    border-top: 2px solid #8c8c8c;
    border-bottom: 1px solid #8c8c8c;
    background: linear-gradient(#ebebeb, #cecece);
    color: #1a1a1a;
    font-size: 16px;
  }

  .package {
    display: flex;
    align-items: center;
    gap: 3px;
    padding-left: 4px;
    white-space: nowrap;
  }

  .package + .package {
    border-left: 3px solid #8c8c8c;
  }

  .marker {
    box-sizing: border-box;
    width: 18px;
    height: 18px;
    border: 1px solid #a0a0a0;
    background: #f4f4f4;
    font-size: 14px;
    line-height: 16px;
    text-align: center;
  }

  .marker.main {
    margin-right: 2px;
    border-color: #c01018;
    background: #e84048;
    color: #fff;
    font-weight: bold;
  }

  .offline {
    width: 108px;
    background: #ec1c24;
    color: #fff;
    line-height: 26px;
    text-align: center;
  }

  .compare {
    box-sizing: border-box;
    width: 108px;
    border: 1px solid #8ab0ec;
    background: #bdd3f6;
    line-height: 24px;
    text-align: center;
  }

  /* Workspace */
  .workspace {
    position: relative;
    display: flex;
    background: #000;
  }

  .pages {
    display: flex;
    flex-direction: column;
    gap: 2px;
    flex: none;
    width: 97px;
    background: #060606;
  }

  .pages button {
    position: relative;
    display: flex;
    flex-direction: column;
    align-items: center;
    justify-content: flex-end;
    gap: 3px;
    box-sizing: border-box;
    width: 96px;
    height: 93px;
    padding-bottom: 4px;
    border: 1px solid #67696e;
    border-bottom-color: #3c3e42;
    background: linear-gradient(#505258, #42444a);
    color: #f0f0f0;
    font-size: 14px;
    line-height: 20px;
  }

  .pages button:nth-child(even) {
    height: 92px;
  }

  .pages button.long {
    font-size: 12px;
  }

  .pages button.active {
    width: 97px;
    padding-bottom: 1px;
    border: 4px solid #0784c4;
    background: #000;
  }

  .pages button.active::after {
    content: '';
    position: absolute;
    top: 21px;
    right: -4px;
    width: 12px;
    height: 43px;
    border-radius: 4px 0 0 4px;
    background: #0784c4;
  }

  .nav-icon {
    width: 48px;
    height: 48px;
  }

  main {
    flex: 1;
    min-width: 0;
  }

  .systems {
    display: flex;
    justify-content: center;
    height: 36px;
    padding-top: 5px;
    border-bottom: 2px solid #4c4c4c;
  }

  .tabs {
    position: relative;
    display: flex;
    height: 30px;
    font-size: 18px;
  }

  .tabs button {
    display: flex;
    align-items: center;
    gap: 9px;
    box-sizing: border-box;
    width: 135px;
    padding: 0 0 2px 8px;
    border: 1px solid #5c6066;
    border-left-color: #222;
    background: linear-gradient(#4e5158, #3e4046);
    color: #d4d4d4;
  }

  .tabs button:last-of-type {
    border-radius: 0 5px 5px 0;
  }

  .tabs button.active {
    width: 132px;
    padding-left: 16px;
    border-color: #2ea0e0;
    border-radius: 5px 0 0 5px;
    background: #0784c8;
    color: #fff;
  }

  .tabs i {
    box-sizing: border-box;
    width: 21px;
    height: 21px;
    border: 1px solid #6c6e70;
  }

  .tabs .active i {
    border: 2px solid #ffd8d8;
  }

  .highlight {
    position: absolute;
    z-index: 2;
    border: 8px solid #f00;
    border-radius: 20px;
    pointer-events: none;
  }

  .tabs .highlight {
    inset: -19px -28px -20px -22px;
  }

  .content {
    display: grid;
    grid-template-columns: 1fr 503px;
  }

  .lists {
    min-width: 0;
    padding: 6px 2px 0 2px;
  }

  .filter {
    display: flex;
    align-items: center;
    box-sizing: border-box;
    height: 30px;
    margin: 0 5px 7px 4px;
    border: 2px solid #7a7a7a;
    border-radius: 8px;
    padding-left: 8px;
  }

  .filter svg {
    width: 18px;
    height: 24px;
  }

  .filter input {
    flex: 1;
    padding: 0 0 2px 4px;
    outline: none;
    font-size: 20px;
  }

  .filter input::placeholder {
    color: #8a8a8a;
    opacity: 1;
  }

  .columns {
    display: grid;
    grid-template-columns: 1527px 128px 1fr;
  }

  table {
    width: 100%;
    table-layout: fixed;
    border-spacing: 0;
    border-right: 2px solid #4a4a4a;
  }

  .logged {
    border-left: 1px solid #4a4a4a;
    border-right: 0;
  }

  .scroll-col {
    width: 18px;
  }

  .hz-col {
    width: 75px;
  }

  .info-col {
    width: 484px;
  }

  th {
    box-sizing: border-box;
    height: 41px;
    padding: 0 0 2px;
    border: solid #686868;
    border-width: 1px 0;
    border-bottom: 2px solid #4c4c4c;
    background: linear-gradient(#606060, #323232);
    font-weight: normal;
    white-space: nowrap;
  }

  th + th {
    border-left: 3px solid #6a6a6a;
  }

  .sort {
    display: inline-block;
    margin-right: 16px;
    border: 9px solid transparent;
    border-top-color: #e4e4e4;
    border-bottom: 0;
    vertical-align: 3px;
  }

  th.hz {
    text-align: left;
  }

  tbody tr {
    height: 32px;
  }

  tbody tr:nth-child(odd) {
    height: 31px;
    background: #121212;
  }

  td {
    box-sizing: border-box;
    padding: 0 0 2px;
    white-space: nowrap;
    vertical-align: middle;
  }

  .name svg {
    display: inline-block;
    vertical-align: middle;
  }

  .available .name {
    padding-left: 4px;
  }

  .available .name svg {
    margin-right: 7px;
  }

  .logged .name {
    padding-left: 4px;
  }

  .logged .name svg {
    margin-right: 4px;
  }

  .wave {
    width: 16px;
    height: 16px;
  }

  .logged-icon {
    width: 20px;
    height: 20px;
  }

  .rate {
    padding-right: 22px;
    text-align: right;
  }

  .info {
    padding-left: 27px;
  }

  .selected td {
    border: solid #c8c8c8;
    border-width: 2px 0;
    line-height: 20px;
  }

  .selected .name {
    border-left-width: 2px;
  }

  .available .selected .name {
    border-right-width: 2px;
    padding-left: 2px;
  }

  .logged .selected .name {
    padding-left: 2px;
  }

  .selected .info {
    border-right-width: 2px;
  }

  .selected td.scroll {
    padding: 3px 2px 0 4px;
    border: 0;
    border-left: 1px solid #000;
    background: #383838;
    vertical-align: top;
  }

  .thumb {
    width: 11px;
    border-radius: 6px;
    background: #e0e0e0;
  }

  .thumb.short {
    height: 118px;
  }

  .thumb.long {
    height: 1228px;
  }

  .rates {
    display: flex;
    flex-direction: column;
    align-items: center;
    gap: 15px;
    padding-top: 674px;
  }

  .rates button {
    box-sizing: border-box;
    width: 100px;
    height: 27px;
    padding-bottom: 2px;
    border: 1px solid #505050;
    background: #333;
    color: #9a9a9a;
    line-height: 23px;
  }

  .rates button.bright {
    border-color: #666;
    background: #454545;
  }

  /* Settings */
  .settings {
    display: flex;
    flex-direction: column;
    border-left: 2px solid #4a4a4a;
    padding: 3px 3px 2px 2px;
  }

  .form {
    display: grid;
    grid-template-columns: 205px 1fr;
    grid-auto-rows: 36px;
    column-gap: 10px;
    align-items: center;
    margin-bottom: 27px;
  }

  .form label {
    padding-bottom: 2px;
    text-align: right;
    white-space: nowrap;
  }

  .form .dim {
    color: #888;
  }

  .toggle {
    appearance: none;
    position: relative;
    box-sizing: border-box;
    width: 57px;
    height: 28px;
    border: 2px solid #7c7c7c;
    border-radius: 11px;
    background: #5c5c5c;
  }

  .toggle::before {
    content: '';
    position: absolute;
    top: 1px;
    left: 0;
    width: 35px;
    height: 22px;
    border-radius: 9px;
    background: #f00;
  }

  .toggle:checked::before {
    left: 18px;
    background: #2ad014;
  }

  .toggle:disabled {
    border-color: #6a6a6a;
    background: #000;
  }

  .toggle:disabled::before {
    background: #125008;
  }

  .condition {
    display: flex;
    align-items: center;
    box-sizing: border-box;
    width: 269px;
    height: 34px;
    padding: 0 6px 0 9px;
    border: 2px solid #6c6c6c;
    border-radius: 8px;
    color: #8c8c8c;
  }

  .condition select {
    flex: 1;
    appearance: none;
    padding: 0 0 2px 10px;
    outline: none;
  }

  .list-icon {
    width: 20px;
    height: 20px;
  }

  .estimates {
    flex: 1;
    padding: 12px 3px 0;
    border-radius: 5px;
    background: #303030;
  }

  fieldset {
    box-sizing: border-box;
    width: 254px;
    height: 183px;
    margin: 0 auto;
    padding: 17px 12px 0;
    border: 3px solid #f8c004;
    border-radius: 9px;
    background: #000;
    color: #fff;
  }

  legend {
    box-sizing: border-box;
    width: 224px;
    height: 24px;
    margin: 0 auto;
    padding: 0;
    border-radius: 4px;
    background: #f8c004;
    color: #2a2200;
    text-align: center;
  }

  .loggers {
    display: flex;
    gap: 2px;
    padding: 0 5px 0 6px;
  }

  .loggers button {
    flex: 1;
    height: 23px;
    border: 1px solid #5c6066;
    background: linear-gradient(#4e5158, #3e4046);
    color: #d0d0d0;
    font-size: 13px;
    line-height: 20px;
  }

  .loggers button:first-child {
    border-radius: 4px 0 0 4px;
  }

  .loggers button:last-child {
    border-radius: 0 4px 4px 0;
  }

  .loggers button.active {
    border-color: #ffb080;
    background: #fd7a34;
  }

  .device {
    display: flex;
    gap: 5px;
    margin: 11px 0 0 3px;
  }

  .device svg {
    width: 72px;
    height: 60px;
  }

  .device strong {
    padding-top: 8px;
    line-height: 22px;
    text-align: center;
    white-space: nowrap;
  }

  fieldset p {
    margin: 9px 0 0;
    color: #c8c8c8;
    font-size: 14px;
    line-height: 18px;
    text-align: center;
  }

  .duration {
    display: flex;
    align-items: center;
    margin-top: 12px;
    padding-left: 9px;
  }

  .duration i {
    width: 17px;
    height: 17px;
    border: 2px solid #ffd8d8;
    background: #ff7474;
  }

  .system-name {
    width: 128px;
    padding-left: 8px;
    color: #505050;
  }

  .approx {
    width: 25px;
  }

  .gauges {
    display: grid;
    grid-template-columns: repeat(3, 1fr);
    margin-top: 27px;
  }

  figure {
    margin: 0;
    text-align: center;
    white-space: nowrap;
  }

  figure svg {
    width: 150px;
    height: 150px;
    margin: 0 auto;
  }

  figure text {
    fill: #fff;
    font-size: 18px;
    font-weight: bold;
    text-anchor: middle;
  }

  figure text.full {
    fill: #1a1400;
  }

  figcaption {
    padding-bottom: 2px;
    line-height: 18px;
  }

  .histogram {
    display: flex;
    gap: 7px;
    box-sizing: border-box;
    width: 438px;
    height: 171px;
    margin: 28px auto 0;
    padding: 3px;
    border: 2px solid #767676;
    background: #000;
  }

  .bin {
    display: flex;
    flex: 1;
    flex-direction: column;
    min-width: 0;
    border: 1px solid #1e1e1e;
  }

  .bin span {
    background: linear-gradient(#555, #3a3a3a);
    color: #c0c0c0;
    font-size: 13px;
    line-height: 22px;
    text-align: center;
  }

  .track {
    display: flex;
    flex: 1;
    align-items: flex-end;
    justify-content: center;
    padding: 3px 3px 2px;
  }

  .bar {
    width: 29px;
    background: #2ad014;
  }

  .caption {
    line-height: 18px;
    text-align: center;
  }

  aside {
    position: relative;
    display: flex;
    flex: none;
    flex-direction: column;
    align-items: center;
    gap: 3px;
    width: 52px;
    padding-top: 6px;
    background: #cfcfcf;
  }

  aside button {
    display: flex;
    align-items: center;
    justify-content: center;
    box-sizing: border-box;
    width: 38px;
    height: 38px;
    border: 1px solid #b8b8b8;
    border-radius: 5px;
    background: linear-gradient(#f0f0f0, #dedede);
  }

  aside button.active {
    outline: 4px solid #0784c4;
  }

  aside .spaced {
    margin-top: 10px;
  }

  .side-icon {
    width: 24px;
    height: 24px;
  }

  aside .highlight {
    top: -9px;
    right: -2px;
    left: -4px;
    height: 245px;
  }

  .badge {
    position: absolute;
    top: 989px;
    width: 175px;
    height: 175px;
    border-radius: 50%;
    background: radial-gradient(closest-side, #ffc400 58%, #dd9c12 86%, #c07c1c);
    color: #000;
    font: bold 120px/175px Roboto, sans-serif;
    text-align: center;
  }

  .one {
    left: 1336px;
  }

  .two {
    left: 2998px;
  }

  .three {
    left: 3573px;
  }

  /* Status bar */
  footer {
    display: flex;
    height: 32px;
    border-top: 2px solid #8c8c8c;
    background: #efefef;
    color: #1c1c1c;
    font-size: 15px;
  }

  footer > div {
    display: flex;
    align-items: center;
    gap: 6px;
    box-sizing: border-box;
    padding: 2px 0 0 8px;
    border-left: 1px solid #d0d0d0;
    white-space: nowrap;
  }

  footer .serial {
    width: 541px;
    padding-left: 1px;
    border: 0;
    font-size: 17px;
  }

  footer .blank {
    width: 222px;
  }

  footer .wide {
    width: 293px;
  }

  .mode {
    flex: 1;
  }

  .mode svg {
    width: 20px;
    height: 22px;
  }

  footer .user {
    width: 542px;
    gap: 10px;
  }

  .naming {
    width: 146px;
  }

  .serial svg,
  .naming svg {
    width: 26px;
    height: 26px;
  }

  .user svg {
    width: 20px;
    height: 24px;
  }

  footer text {
    font: bold 11px 'Liberation Sans', sans-serif;
  }
</style>
